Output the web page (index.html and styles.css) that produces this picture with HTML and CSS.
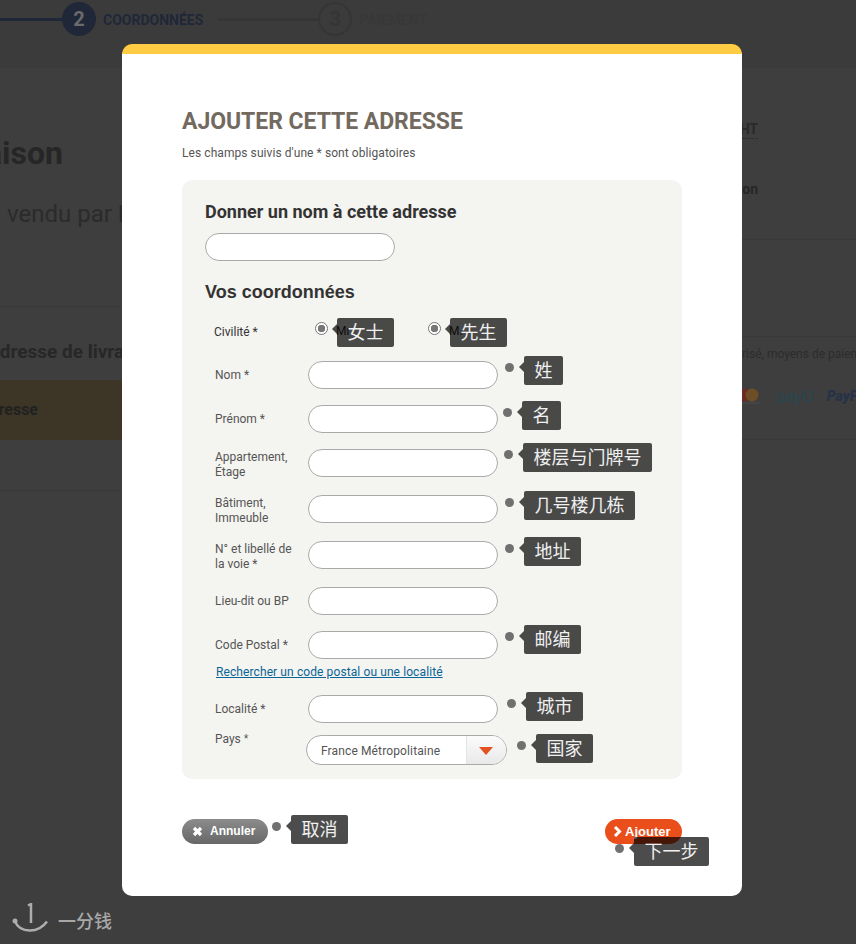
FILE: index.html
```html
<!DOCTYPE html>
<html lang="fr">
<head>
	<meta charset="utf-8" />
	<title>Ajouter cette adresse</title>
	<link rel="stylesheet" href="styles.css">
</head>
<body>
	<!-- page under the overlay -->
	<div class="page">
		<header class="steps">
			<span class="step-line done"></span>
			<span class="step-num current">2</span>
			<span class="step-name current">COORDONNÉES</span>
			<span class="step-line todo"></span>
			<span class="step-num todo">3</span>
			<span class="step-name todo">PAIEMENT</span>
		</header>
		<div class="columns">
			<div class="col-left">
				<div class="page-title"><span>Livraison</span></div>
				<p class="page-sub">vendu par Leroy</p>
				<hr class="rule rule-a">
				<div class="addr-title">Adresse de livraison</div>
				<div class="addr-strip"><div class="addr-strip-in"><span>Adresse</span></div></div>
				<hr class="rule rule-b">
			</div>
			<div class="col-right">
				<div class="price"><span>HT</span></div>
				<div class="ship"><span>Livraison</span></div>
				<hr class="rule rule-c">
				<hr class="rule rule-d">
				<p class="pay-note">risé, moyens de paiement</p>
				<div class="pay-logos">
					<svg class="mc" width="18" height="16" viewBox="0 0 18 16"><circle cx="2" cy="7" r="6.5" fill="#6b2a22"/><circle cx="10" cy="7" r="6.5" fill="#6e4e24"/><rect x="0" y="14.5" width="18" height="1" fill="#4c4c4c"/></svg>
					<span class="payu">payU</span>
					<span class="paypal">PayPal</span>
				</div>
				<hr class="rule rule-e">
			</div>
		</div>
	</div>

	<div class="mark">
		<svg width="38" height="30" viewBox="0 0 38 30"><path d="M16 2.5 L19 1 V20" fill="none" stroke="#adadad" stroke-width="2.500"/><path d="M3 18.500 C8 30 26 31 35 18.500" fill="none" stroke="#adadad" stroke-width="2.500"/><circle cx="3" cy="18" r="2.500" fill="#adadad"/></svg>
		<span class="mark-text">一分钱</span>
	</div>

	<div class="modal">
		<h1 class="modal-title">AJOUTER CETTE ADRESSE</h1>
		<p class="modal-note">Les champs suivis d'une * sont obligatoires</p>

		<form class="panel">
			<h2 class="panel-head">Donner un nom à cette adresse</h2>
			<input class="field" type="text">
			<h3 class="panel-head alt">Vos coordonnées</h3>

			<div class="row civ">
				<label class="lbl dark">Civilité *</label>
				<div class="opt">
					<input class="radio" type="radio" name="civ" checked>
					<span class="opt-text">Mr</span>
					<div class="tip tip-mme"><span class="bubble">女士</span></div>
				</div>
				<div class="opt">
					<input class="radio" type="radio" name="civ2" checked>
					<span class="opt-text">M.</span>
					<div class="tip tip-mme"><span class="bubble">先生</span></div>
				</div>
			</div>

			<div class="row">
				<label class="lbl">Nom *</label>
				<input class="field" type="text">
				<div class="tip tip-nom"><i class="dot"></i><span class="bubble">姓</span></div>
			</div>
			<div class="row">
				<label class="lbl">Prénom *</label>
				<input class="field" type="text">
				<div class="tip tip-prenom"><i class="dot"></i><span class="bubble">名</span></div>
			</div>
			<div class="row two">
				<label class="lbl">Appartement,<br>Étage</label>
				<input class="field" type="text">
				<div class="tip tip-appart"><i class="dot"></i><span class="bubble">楼层与门牌号</span></div>
			</div>
			<div class="row two">
				<label class="lbl">Bâtiment,<br>Immeuble</label>
				<input class="field" type="text">
				<div class="tip tip-bat"><i class="dot"></i><span class="bubble">几号楼几栋</span></div>
			</div>
			<div class="row two">
				<label class="lbl">N° et libellé de<br>la voie *</label>
				<input class="field" type="text">
				<div class="tip tip-bat"><i class="dot"></i><span class="bubble">地址</span></div>
			</div>
			<div class="row">
				<label class="lbl">Lieu-dit ou BP</label>
				<input class="field" type="text">
			</div>
			<div class="row tight">
				<label class="lbl">Code Postal *</label>
				<input class="field" type="text">
				<div class="tip tip-cp"><i class="dot"></i><span class="bubble">邮编</span></div>
			</div>
			<a class="search" href="#">Rechercher un code postal ou une localité</a>
			<div class="row tight">
				<label class="lbl">Localité *</label>
				<input class="field" type="text">
				<div class="tip tip-loc"><i class="dot"></i><span class="bubble">城市</span></div>
			</div>
			<div class="row pays">
				<label class="lbl">Pays <span class="star">*</span></label>
				<div class="select">
					<span class="select-val">France Métropolitaine</span>
					<span class="select-btn"><i class="caret"></i></span>
				</div>
				<div class="tip tip-pays"><i class="dot"></i><span class="bubble">国家</span></div>
			</div>
		</form>

		<div class="actions">
			<div class="btn-wrap">
				<button class="btn grey" type="button">
					<svg width="11" height="11" viewBox="0 0 11 11"><path d="M2 2 L9 9 M9 2 L2 9" stroke="#fff" stroke-width="3.200"/></svg>
					<span class="btn-text">Annuler</span>
				</button>
				<div class="tip tip-cancel"><i class="dot"></i><span class="bubble">取消</span></div>
			</div>
			<div class="btn-wrap">
				<button class="btn red" type="button">
					<svg width="9" height="11" viewBox="0 0 9 11"><path d="M2 1 L6.500 5.500 L2 10" fill="none" stroke="#fff" stroke-width="3"/></svg>
					Ajouter
				</button>
				<div class="tip tip-next"><i class="dot"></i><span class="bubble">下一步</span></div>
			</div>
		</div>
	</div>
</body>
</html>
```

FILE: styles.css
```css
body {
	margin: 0;
	width: 856px;
	height: 944px;
	overflow: hidden;
	position: relative;
	background: #3e3e3e;
	font-family: Roboto, "Noto Sans CJK SC", sans-serif;
	font-size: 12px;
}

/* dimmed page */
.page {
	height: 944px;
	overflow: hidden;
}
.steps {
	height: 68px;
	box-sizing: border-box;
	padding-top: 2px;
	display: flex;
	align-items: flex-start;
	background: #3b3b3b;
	font-weight: 700;
	font-size: 14px;
}
.step-line {
	height: 3px;
	margin-top: 16px;
}
.step-line.done {
	width: 62px;
	background: #1f2738;
}
.step-line.todo {
	width: 100px;
	margin-left: 15px;
	background: #353535;
}
.step-num {
	width: 34px;
	height: 34px;
	box-sizing: border-box;
	border-radius: 50%;
	display: flex;
	align-items: center;
	justify-content: center;
	font-size: 20px;
}
.step-num.current {
	background: #1f2738;
	color: #6a6a6a;
}
.step-num.todo {
	border: 2px solid #353535;
	color: #353535;
}
.step-name {
	margin-left: 7px;
	line-height: 36px;
}
.step-name.current {
	color: #1f2738;
}
.step-name.todo {
	color: #383838;
}

.columns {
	display: flex;
	justify-content: space-between;
}
.col-left {
	width: 122px;
	overflow: hidden;
}
.col-right {
	width: 114px;
	overflow: hidden;
}
.rule {
	border: none;
	height: 1px;
	margin: 0;
	background: #383838;
}

.page-title {
	width: 63px;
	margin-top: 64px;
	display: flex;
	justify-content: flex-end;
	white-space: nowrap;
	font-size: 32px;
	line-height: 42px;
	font-weight: 700;
	color: #262626;
}
.page-sub {
	margin: 25px 0 0 7px;
	font-size: 24px;
	line-height: 30px;
	color: #2b2b2b;
	white-space: nowrap;
}
.rule-a {
	margin-top: 77px;
}
.addr-title {
	margin: 33px 0 0 -13px;
	font-size: 19px;
	line-height: 24px;
	font-weight: 700;
	color: #272727;
	white-space: nowrap;
}
.addr-strip {
	margin-top: 16px;
	height: 60px;
	background: #3d3626;
}
.addr-strip-in {
	width: 38px;
	display: flex;
	justify-content: flex-end;
	white-space: nowrap;
	font-size: 16px;
	font-weight: 700;
	line-height: 60px;
	color: #212121;
}
.rule-b {
	margin-top: 50px;
}

.price {
	width: 16px;
	margin-top: 52px;
	display: flex;
	justify-content: flex-end;
	font-size: 14px;
	line-height: 18px;
	font-weight: 700;
	color: #2a2a2a;
	border-bottom: 1px dashed #2e2e2e;
	white-space: nowrap;
}
.ship {
	width: 16px;
	margin-top: 41px;
	display: flex;
	justify-content: flex-end;
	font-size: 14px;
	line-height: 18px;
	font-weight: 700;
	color: #262626;
	white-space: nowrap;
}
.rule-c {
	margin-top: 41px;
}
.rule-d {
	margin-top: 96px;
}
.pay-note {
	margin: 9px 0 0;
	font-size: 12px;
	line-height: 16px;
	color: #2c2c2c;
	white-space: nowrap;
}
.pay-logos {
	margin-top: 24px;
	height: 20px;
	display: flex;
	align-items: center;
	white-space: nowrap;
}
.mc {
	flex: none;
}
.payu {
	margin-left: 16px;
	font-size: 17px;
	color: #274650;
}
.paypal {
	margin-left: 13px;
	font-size: 14px;
	font-weight: 900;
	font-style: italic;
	color: #263247;
}
.rule-e {
	margin-top: 33px;
}

.mark {
	position: absolute;
	left: 12px;
	top: 903px;
	display: flex;
	align-items: flex-start;
	gap: 8px;
}
.mark-text {
	margin-top: 4px;
	font-size: 18px;
	line-height: 26px;
	font-weight: 500;
	color: #a8a8a8;
	font-family: "Noto Sans CJK SC", sans-serif;
}

/* modal */
.modal {
	position: absolute;
	left: 122px;
	top: 44px;
	width: 620px;
	height: 852px;
	box-sizing: border-box;
	padding: 0 60px;
	background: #fff;
	border-top: 10px solid #ffcc44;
	border-radius: 10px;
}
.modal-title {
	margin: 55px 0 0;
	font-size: 23px;
	line-height: 26px;
	font-weight: 700;
	letter-spacing: -.05px;
	color: #736a5f;
}
.modal-note {
	margin: 10px 0 0;
	font-size: 12px;
	line-height: 16px;
	letter-spacing: .07px;
	color: #555;
}
.panel {
	margin-top: 19px;
	height: 599px;
	box-sizing: border-box;
	padding: 21px 23px 0;
	background: #f4f4f0;
	border-radius: 10px;
}
.panel-head {
	margin: 0 0 10px;
	font-size: 18px;
	line-height: 22px;
	font-weight: 700;
	color: #333;
}
.panel-head.alt {
	margin: 20px 0 15px;
	font-family: "Liberation Sans", sans-serif;
}
.field {
	display: block;
	width: 190px;
	height: 28px;
	box-sizing: border-box;
	flex: none;
	padding: 0 12px;
	background: #fff;
	border: 1px solid #aaa;
	border-radius: 14px;
	outline: none;
}

.row {
	position: relative;
	display: flex;
	align-items: flex-start;
	margin-bottom: 16px;
}
.row.two {
	height: 30px;
}
.row.tight {
	margin-bottom: 0;
}
.lbl {
	width: 93px;
	flex: none;
	padding-left: 10px;
	margin-top: 7px;
	font-size: 12px;
	line-height: 15px;
	color: #555;
}
.row.two .lbl {
	margin-top: 1px;
}
.lbl.dark {
	width: 101px;
	padding-left: 9px;
	margin-top: 7px;
	color: #333;
}
.civ {
	height: 43px;
	margin-bottom: 0;
}
.opt {
	position: relative;
	width: 113px;
	display: flex;
	align-items: flex-start;
	margin-top: 4px;
	font-size: 12px;
	color: #333;
}
.radio {
	appearance: none;
	width: 13px;
	height: 13px;
	margin: 0;
	box-sizing: border-box;
	border: 1px solid #777;
	border-radius: 50%;
	background: radial-gradient(circle, #777 0 3.5px, #fff 4px);
}
.opt-text {
	margin-left: 8px;
	line-height: 18px;
}
.search {
	display: block;
	margin: 5px 0 15px 11px;
	font-size: 12px;
	line-height: 16px;
	letter-spacing: .1px;
	color: #0a6496;
}
.pays {
	margin: 12px 0 0;
}
.pays .lbl {
	width: 91px;
	margin-top: -3px;
}
.star {
	font-family: "Liberation Sans", sans-serif;
	color: #555;
}
.select {
	width: 201px;
	height: 30px;
	box-sizing: border-box;
	display: flex;
	overflow: hidden;
	background: #fff;
	border: 1px solid #aaa;
	border-radius: 15px;
}
.select-val {
	flex: 1;
	padding-left: 14px;
	font-size: 12px;
	line-height: 30px;
	letter-spacing: .13px;
	color: #555;
}
.select-btn {
	width: 40px;
	display: flex;
	align-items: center;
	justify-content: center;
	padding-right: 2px;
	box-sizing: border-box;
	background: linear-gradient(#fbfbfb, #e9e9e9);
	border-left: 1px solid #e4e4e4;
}
.caret {
	width: 0;
	height: 0;
	margin-top: 1px;
	border-left: 7px solid transparent;
	border-right: 7px solid transparent;
	border-top: 8px solid #e2511f;
}

/* notes laid over the form */
.tip {
	position: absolute;
	display: flex;
	align-items: flex-start;
	white-space: nowrap;
	z-index: 5;
}
.dot {
	width: 9px;
	height: 9px;
	margin: 7px 10px 0 0;
	border-radius: 50%;
	background: #707070;
}
.bubble {
	position: relative;
	display: block;
	padding: 0 10.5px;
	height: 29px;
	font-family: "Noto Sans CJK SC", sans-serif;
	font-size: 18px;
	line-height: 26px;
	color: #f0f0f0;
	background: rgba(0, 0, 0, .7);
	border-radius: 2px;
}
.bubble::before {
	content: "";
	position: absolute;
	left: -5px;
	top: 6px;
	border-top: 5px solid transparent;
	border-bottom: 5px solid transparent;
	border-right: 5px solid rgba(0, 0, 0, .7);
}
.tip-mme { left: 22px; top: -4px; }
.tip-nom { left: 300px; top: -5px; }
.tip-prenom { left: 298px; top: -4px; }
.tip-appart { left: 299px; top: -6px; }
.tip-bat { left: 300px; top: -4px; }
.tip-cp { left: 300px; top: -6px; }
.tip-loc { left: 302px; top: -3px; }
.tip-pays { left: 312px; top: -1px; }

/* footer buttons */
.actions {
	margin-top: 40px;
	display: flex;
	justify-content: space-between;
}
.btn-wrap {
	position: relative;
}
.btn {
	display: flex;
	align-items: center;
	height: 25px;
	padding: 0;
	border: none;
	border-radius: 12.5px;
	font-family: "Liberation Sans", sans-serif;
	font-weight: 700;
	color: #fff;
}
.btn.grey {
	width: 86px;
	padding-left: 10px;
	gap: 7px;
	font-size: 12px;
	background: linear-gradient(#8c8c8c, #676767);
}
.btn-text {
	margin-top: -2px;
}
.btn.red {
	width: 77px;
	padding-left: 8px;
	gap: 3px;
	font-size: 13px;
	background: #e94e1b;
}
.tip-cancel { left: 90px; top: -4px; }
.tip-next { left: 10px; top: 18px; }
```
